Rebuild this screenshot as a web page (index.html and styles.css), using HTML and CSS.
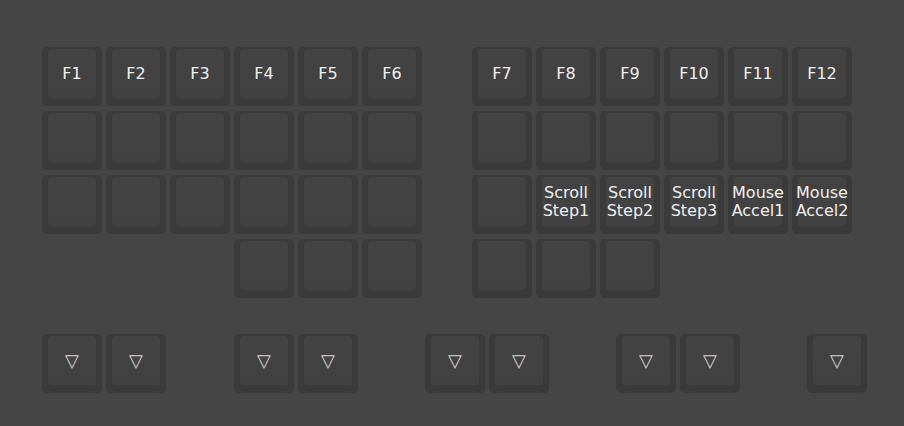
FILE: index.html
```html
<!DOCTYPE html>
<html lang="en">
<head>
    <meta charset="UTF-8">
    <meta name="viewport" content="width=device-width, initial-scale=1.0">
    <title>Keymap</title>
    <link rel="stylesheet" href="styles.css">
</head>
<body>
    <div id="keyboard">
        <!-- linha 1 -->
        <div class="key"><span class="cap">F1</span></div>
        <div class="key"><span class="cap">F2</span></div>
        <div class="key"><span class="cap">F3</span></div>
        <div class="key"><span class="cap">F4</span></div>
        <div class="key"><span class="cap">F5</span></div>
        <div class="key"><span class="cap">F6</span></div>
        <div class="blank"></div>
        <div class="key"><span class="cap">F7</span></div>
        <div class="key"><span class="cap">F8</span></div>
        <div class="key"><span class="cap">F9</span></div>
        <div class="key"><span class="cap">F10</span></div>
        <div class="key"><span class="cap">F11</span></div>
        <div class="key"><span class="cap">F12</span></div>

        <!-- linha 2 -->
        <div class="key"><span class="cap"></span></div>
        <div class="key"><span class="cap"></span></div>
        <div class="key"><span class="cap"></span></div>
        <div class="key"><span class="cap"></span></div>
        <div class="key"><span class="cap"></span></div>
        <div class="key"><span class="cap"></span></div>
        <div class="blank"></div>
        <div class="key"><span class="cap"></span></div>
        <div class="key"><span class="cap"></span></div>
        <div class="key"><span class="cap"></span></div>
        <div class="key"><span class="cap"></span></div>
        <div class="key"><span class="cap"></span></div>
        <div class="key"><span class="cap"></span></div>

        <!-- linha 3 -->
        <div class="key"><span class="cap"></span></div>
        <div class="key"><span class="cap"></span></div>
        <div class="key"><span class="cap"></span></div>
        <div class="key"><span class="cap"></span></div>
        <div class="key"><span class="cap"></span></div>
        <div class="key"><span class="cap"></span></div>
        <div class="blank"></div>
        <div class="key"><span class="cap"></span></div>
        <div class="key"><span class="cap">Scroll<br>Step1</span></div>
        <div class="key"><span class="cap">Scroll<br>Step2</span></div>
        <div class="key"><span class="cap">Scroll<br>Step3</span></div>
        <div class="key"><span class="cap">Mouse<br>Accel1</span></div>
        <div class="key"><span class="cap">Mouse<br>Accel2</span></div>

        <!-- linha 4 -->
        <div class="blank"></div>
        <div class="blank"></div>
        <div class="blank"></div>
        <div class="key"><span class="cap"></span></div>
        <div class="key"><span class="cap"></span></div>
        <div class="key"><span class="cap"></span></div>
        <div class="blank"></div>
        <div class="key"><span class="cap"></span></div>
        <div class="key"><span class="cap"></span></div>
        <div class="key"><span class="cap"></span></div>
    </div>

    <div id="thumbs">
        <div class="group">
            <div class="key"><span class="cap arrow">&#9661;</span></div>
            <div class="key"><span class="cap arrow">&#9661;</span></div>
        </div>
        <div class="group wide">
            <div class="key"><span class="cap arrow">&#9661;</span></div>
            <div class="key"><span class="cap arrow">&#9661;</span></div>
        </div>
        <div class="group">
            <div class="key"><span class="cap arrow">&#9661;</span></div>
            <div class="key"><span class="cap arrow">&#9661;</span></div>
        </div>
        <div class="group">
            <div class="key"><span class="cap arrow">&#9661;</span></div>
            <div class="key"><span class="cap arrow">&#9661;</span></div>
        </div>
        <div class="group">
            <div class="key"><span class="cap arrow">&#9661;</span></div>
        </div>
    </div>
</body>
</html>
```

FILE: styles.css
```css
body {
    margin: 0;
    background-color: #454545;
    font-family: "DejaVu Sans", sans-serif;
    color: #f0f0f0;
}
#keyboard {
    display: grid;
    grid-template-columns: repeat(6, 60px) 42px repeat(6, 60px);
    grid-auto-rows: 59px;
    gap: 5px 4px;
    padding: 47px 0 0 42px;
}
#thumbs {
    display: flex;
    gap: 67px;
    padding: 36px 0 0 42px;
}
.group {
    display: flex;
    gap: 4px;
}
.group.wide {
    margin-left: 1px;
}
.key {
    box-sizing: border-box;
    width: 60px;
    height: 59px;
    padding: 2px 6px 8px 6px;
    background-color: #3a3a3a;
    border-radius: 5px;
}
.cap {
    display: flex;
    align-items: center;
    justify-content: center;
    height: 100%;
    background: linear-gradient(#434343, #414141);
    border-radius: 4px;
    font-size: 16px;
    line-height: 18px;
    text-align: center;
    white-space: nowrap;
}
.arrow {
    color: #d4d4d4;
    font-size: 18px;
}
```
